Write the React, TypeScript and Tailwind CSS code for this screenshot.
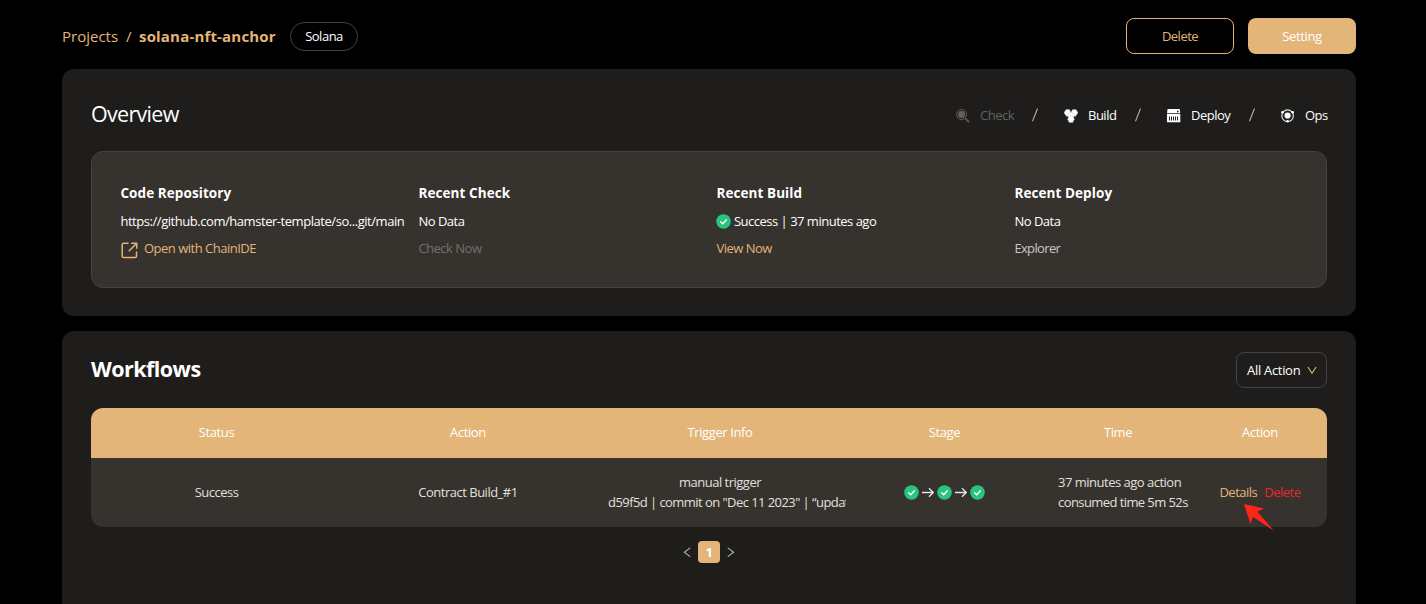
import type { ReactNode } from "react";

function CheckBadge({ className = "" }: { className?: string }) {
  return (
    <svg viewBox="0 0 15 15" className={`h-[15px] w-[15px] shrink-0 ${className}`}>
      <circle cx="7.5" cy="7.5" r="7.3" fill="#28c57c" />
      <path d="M4.3 7.5 6.7 9.7 10.7 5.6" fill="none" stroke="#fff" strokeWidth="1.5" />
    </svg>
  );
}

function StageArrow() {
  return (
    <svg viewBox="0 0 12 11" className="h-[11px] w-[12px]" fill="none" stroke="#e8e7e6" strokeWidth="1.3">
      <path d="M0 5.5H11.3M7 1.2 11.3 5.5 7 9.8" />
    </svg>
  );
}

function CheckIcon() {
  return (
    <svg viewBox="0 0 14 14" className="h-[14px] w-[14px]" fill="none" stroke="#626160">
      <circle cx="5.6" cy="5.6" r="5" strokeWidth="1" />
      <circle cx="5.6" cy="5.6" r="3.5" fill="#626160" stroke="none" />
      <path d="M9.2 9.3 13 13.1" strokeWidth="1.6" />
    </svg>
  );
}

function BuildIcon() {
  return (
    <svg viewBox="0 0 14 14" className="h-[14px] w-[14px]" fill="#fff" stroke="#a9a8a7" strokeWidth="0.4">
      <path d="M2 .6h3.4L7.2 3.8 5.4 7.2H2.3L0 3.7Z" strokeLinejoin="round" />
      <path d="M8.6.6H12l2 3.1-2.3 3.5H8.6L6.8 3.8Z" strokeLinejoin="round" />
      <path d="M5.3 3.4h3.4l2 3-2 3H5.3l-2-3Z" />
      <path d="M5.3 7h3.4l1.8 3.2-1.8 3.3H5.3l-1.8-3.3Z" />
    </svg>
  );
}

function DeployIcon() {
  return (
    <svg viewBox="0 0 14 14" className="h-[14px] w-[14px]">
      <path d="M.6 0h12.1L13.3 4.2H0ZM0 5.1h13.3v8.2H0Z" fill="#fff" />
      <path d="M10 2.5h1.5" stroke="#1e1d1b" strokeWidth="1.4" />
      <path d="M2.5 7.5v4M4.5 7.5v4M6.5 7.5v4M8.5 7.5v4M10.5 7.5v4" stroke="#222" strokeWidth="1" />
    </svg>
  );
}

function OpsIcon() {
  return (
    <svg viewBox="0 0 14 14" className="h-[14px] w-[14px]">
      <circle cx="6.6" cy="6.7" r="5.8" fill="none" stroke="#e2e2e1" strokeWidth="1.2" />
      <circle cx="6.6" cy="6.5" r="3.1" fill="#fff" />
      <circle cx="1.5" cy="3.3" r="1.3" fill="#fff" />
      <circle cx="11.7" cy="3.3" r="1.3" fill="#fff" />
      <circle cx="6.6" cy="12.3" r="1.3" fill="#fff" />
    </svg>
  );
}

function OpenIcon() {
  return (
    <svg viewBox="0 0 17 17" className="h-[17px] w-[17px]" fill="none" stroke="#e3b579" strokeWidth="1.5">
      <path d="M7.5 1.3H2.5a1.3 1.3 0 0 0-1.3 1.3v11.6a1.3 1.3 0 0 0 1.3 1.3h11.7a1.3 1.3 0 0 0 1.3-1.3V9.5" />
      <path d="M10.3 1.3h5.4v5.4M15.3 1.7 7.7 9.3" />
    </svg>
  );
}

function Chevron({ d, className }: { d: string; className: string }) {
  return (
    <svg viewBox="0 0 10 10" className={className} fill="none" stroke="currentColor" strokeWidth="1.1">
      <path d={d} />
    </svg>
  );
}

function Stage({ icon, label, width, muted }: { icon: ReactNode; label: string; width: string; muted?: boolean }) {
  return (
    <div className={`flex items-center gap-[10px] ${width} ${muted ? "text-[#626160]" : "text-white"}`}>
      <span className="pt-[2px]">{icon}</span>
      <span className="leading-5 whitespace-nowrap">{label}</span>
    </div>
  );
}

function Slash({ width }: { width: string }) {
  return (
    <svg viewBox="0 0 6 14" className={`h-[14px] ${width}`} preserveAspectRatio="xMinYMid" fill="none" stroke="#b1b0af" strokeWidth="1.1">
      <path d="M5.5.5.5 13.3" />
    </svg>
  );
}

function Info({ title, value, children }: { title: string; value: ReactNode; children: ReactNode }) {
  return (
    <div className="flex flex-col whitespace-nowrap">
      <h3 className="h-[29px] text-[13.5px] leading-7 font-bold tracking-[0.08px]">{title}</h3>
      <div className="flex h-7 items-center">{value}</div>
      <div className="flex h-[26px] items-center">{children}</div>
    </div>
  );
}

const columns = "grid grid-cols-[251px_252px_252px_197px_150px_134px] items-center text-center";

export default function App() {
  return (
    <div className="flex h-[604px] flex-col overflow-hidden bg-black pr-[70px] pl-[62px] font-['Open_Sans','Noto_Sans',sans-serif] text-[13px] tracking-[-0.5px] text-white">
      <header className="flex h-[69px] shrink-0 items-start justify-between pt-[18px]">
        <div className="flex h-9 items-center text-[15px] tracking-[0px] text-[#e3b579]">
          <span className="w-[64px]">Projects</span>
          <span className="w-[13px]">/</span>
          <span className="w-[151px] font-bold tracking-[0.18px] whitespace-nowrap">solana-nft-anchor</span>
          <span className="flex h-[29px] w-[68px] items-center justify-center rounded-full border border-[#434343] pt-[2px] text-[13px] tracking-[-0.5px] text-white">
            Solana
          </span>
        </div>
        <div className="flex gap-[14px]">
          <button className="h-9 w-[108px] rounded-lg border border-[#e3b579] pt-[2px] text-[#e3b579]">Delete</button>
          <button className="h-9 w-[108px] rounded-lg bg-[#e3b579] pt-[2px] tracking-[-0.35px]">Setting</button>
        </div>
      </header>

      <section className="h-[247px] shrink-0 rounded-xl bg-[#1e1d1b] px-[29px] pt-[29px]">
        <div className="flex h-[53px] items-start justify-between">
          <h2 className="text-[21.5px] leading-8 tracking-[-0.7px]">Overview</h2>
          <div className="flex h-[34px] items-center">
            <Stage icon={<CheckIcon />} label="Check" width="w-[76px]" muted />
            <Slash width="w-[32px]" />
            <Stage icon={<BuildIcon />} label="Build" width="w-[71px]" />
            <Slash width="w-[32px]" />
            <Stage icon={<DeployIcon />} label="Deploy" width="w-[82px]" />
            <Slash width="w-[32px]" />
            <Stage icon={<OpsIcon />} label="Ops" width="w-[46px]" />
          </div>
        </div>
        <div className="grid h-[137px] grid-cols-[298px_298px_298px_298px] rounded-xl border border-[#434343] bg-[#36322d] pt-[27px] pl-[28.4px]">
          <Info title="Code Repository" value={<span className="tracking-[-0.45px]">https://github.com/hamster-template/so...git/main</span>}>
            <a className="flex items-center gap-[6px] text-[#e3b579]">
              <span className="pt-[2px] pl-[0.6px]"><OpenIcon /></span>
              Open with ChainIDE
            </a>
          </Info>
          <Info title="Recent Check" value="No Data">
            <span className="text-[#73706d]">Check Now</span>
          </Info>
          <Info
            title="Recent Build"
            value={
              <>
                <CheckBadge className="mr-[2.6px] mb-[2px]" />
                <span>Success | 37 minutes ago</span>
              </>
            }
          >
            <span className="text-[#e3b579]">View Now</span>
          </Info>
          <Info title="Recent Deploy" value="No Data">
            <span className="tracking-[-0.65px] text-[#c9c8c7]">Explorer</span>
          </Info>
        </div>
      </section>

      <section className="mt-[15px] h-[290px] shrink-0 rounded-t-xl bg-[#1e1d1b] px-[29px] pt-[21px]">
        <div className="flex h-14 items-start justify-between">
          <h2 className="text-[21.5px] leading-[34px] font-bold tracking-[-0.55px]">Workflows</h2>
          <button className="flex h-9 w-[91px] items-center justify-between rounded-lg border border-[#434343] pr-[9px] pl-[10px] tracking-[-0.3px] whitespace-nowrap">
            <span className="pt-[2px]">All Action</span>
            <Chevron d="M.9 2 5 8.2 9.1 2" className="h-[10px] w-[10px] text-[#e3b579]" />
          </button>
        </div>
        <div>
          <div className={`${columns} h-[50px] rounded-t-xl bg-[#e3b579] tracking-[-0.4px]`}>
            <span>Status</span>
            <span>Action</span>
            <span>Trigger Info</span>
            <span>Stage</span>
            <span>Time</span>
            <span>Action</span>
          </div>
          <div className={`${columns} h-[69px] rounded-b-xl bg-[#36322d] pb-px leading-5 whitespace-nowrap text-[#e1e0df]`}>
            <span>Success</span>
            <span>Contract Build_#1</span>
            <div className="overflow-hidden pl-[14px]">
              <p className="-ml-[14px]">manual trigger</p>
              <p className="text-left tracking-[-0.56px]">d59f5d | commit on "Dec 11 2023" | “update</p>
            </div>
            <div className="flex items-center justify-center gap-[3px] pt-px">
              <CheckBadge />
              <StageArrow />
              <CheckBadge />
              <StageArrow />
              <CheckBadge />
            </div>
            <div className="pl-[15px] text-left">
              <p>37 minutes ago action</p>
              <p className="tracking-[-0.58px]">consumed time 5m 52s</p>
            </div>
            <div className="relative flex justify-center gap-[7px]">
              <span className="text-[#e3b579]">Details</span>
              <span className="text-[#e8292b]">Delete</span>
              <svg viewBox="0 0 30 27" className="absolute top-[22px] left-[51px] h-[27px] w-[30px]">
                <path d="M0 0 20 4.5 13.3 7.8 29.8 26.6 9 13 6.5 20Z" fill="#ff2517" />
              </svg>
            </div>
          </div>
        </div>
        <div className="mt-[14px] flex h-[22px] items-center justify-center gap-[6px] text-[#b4b3b2]">
          <Chevron d="M8.2 .9 2.4 5.2 8.2 9.6" className="h-[10px] w-[10px]" />
          <span className="flex h-[22px] w-[22px] items-center justify-center rounded bg-[#e3b579] pt-px font-bold text-white">1</span>
          <Chevron d="M1.8 .9 7.6 5.2 1.8 9.6" className="h-[10px] w-[10px]" />
        </div>
      </section>
    </div>
  );
}
